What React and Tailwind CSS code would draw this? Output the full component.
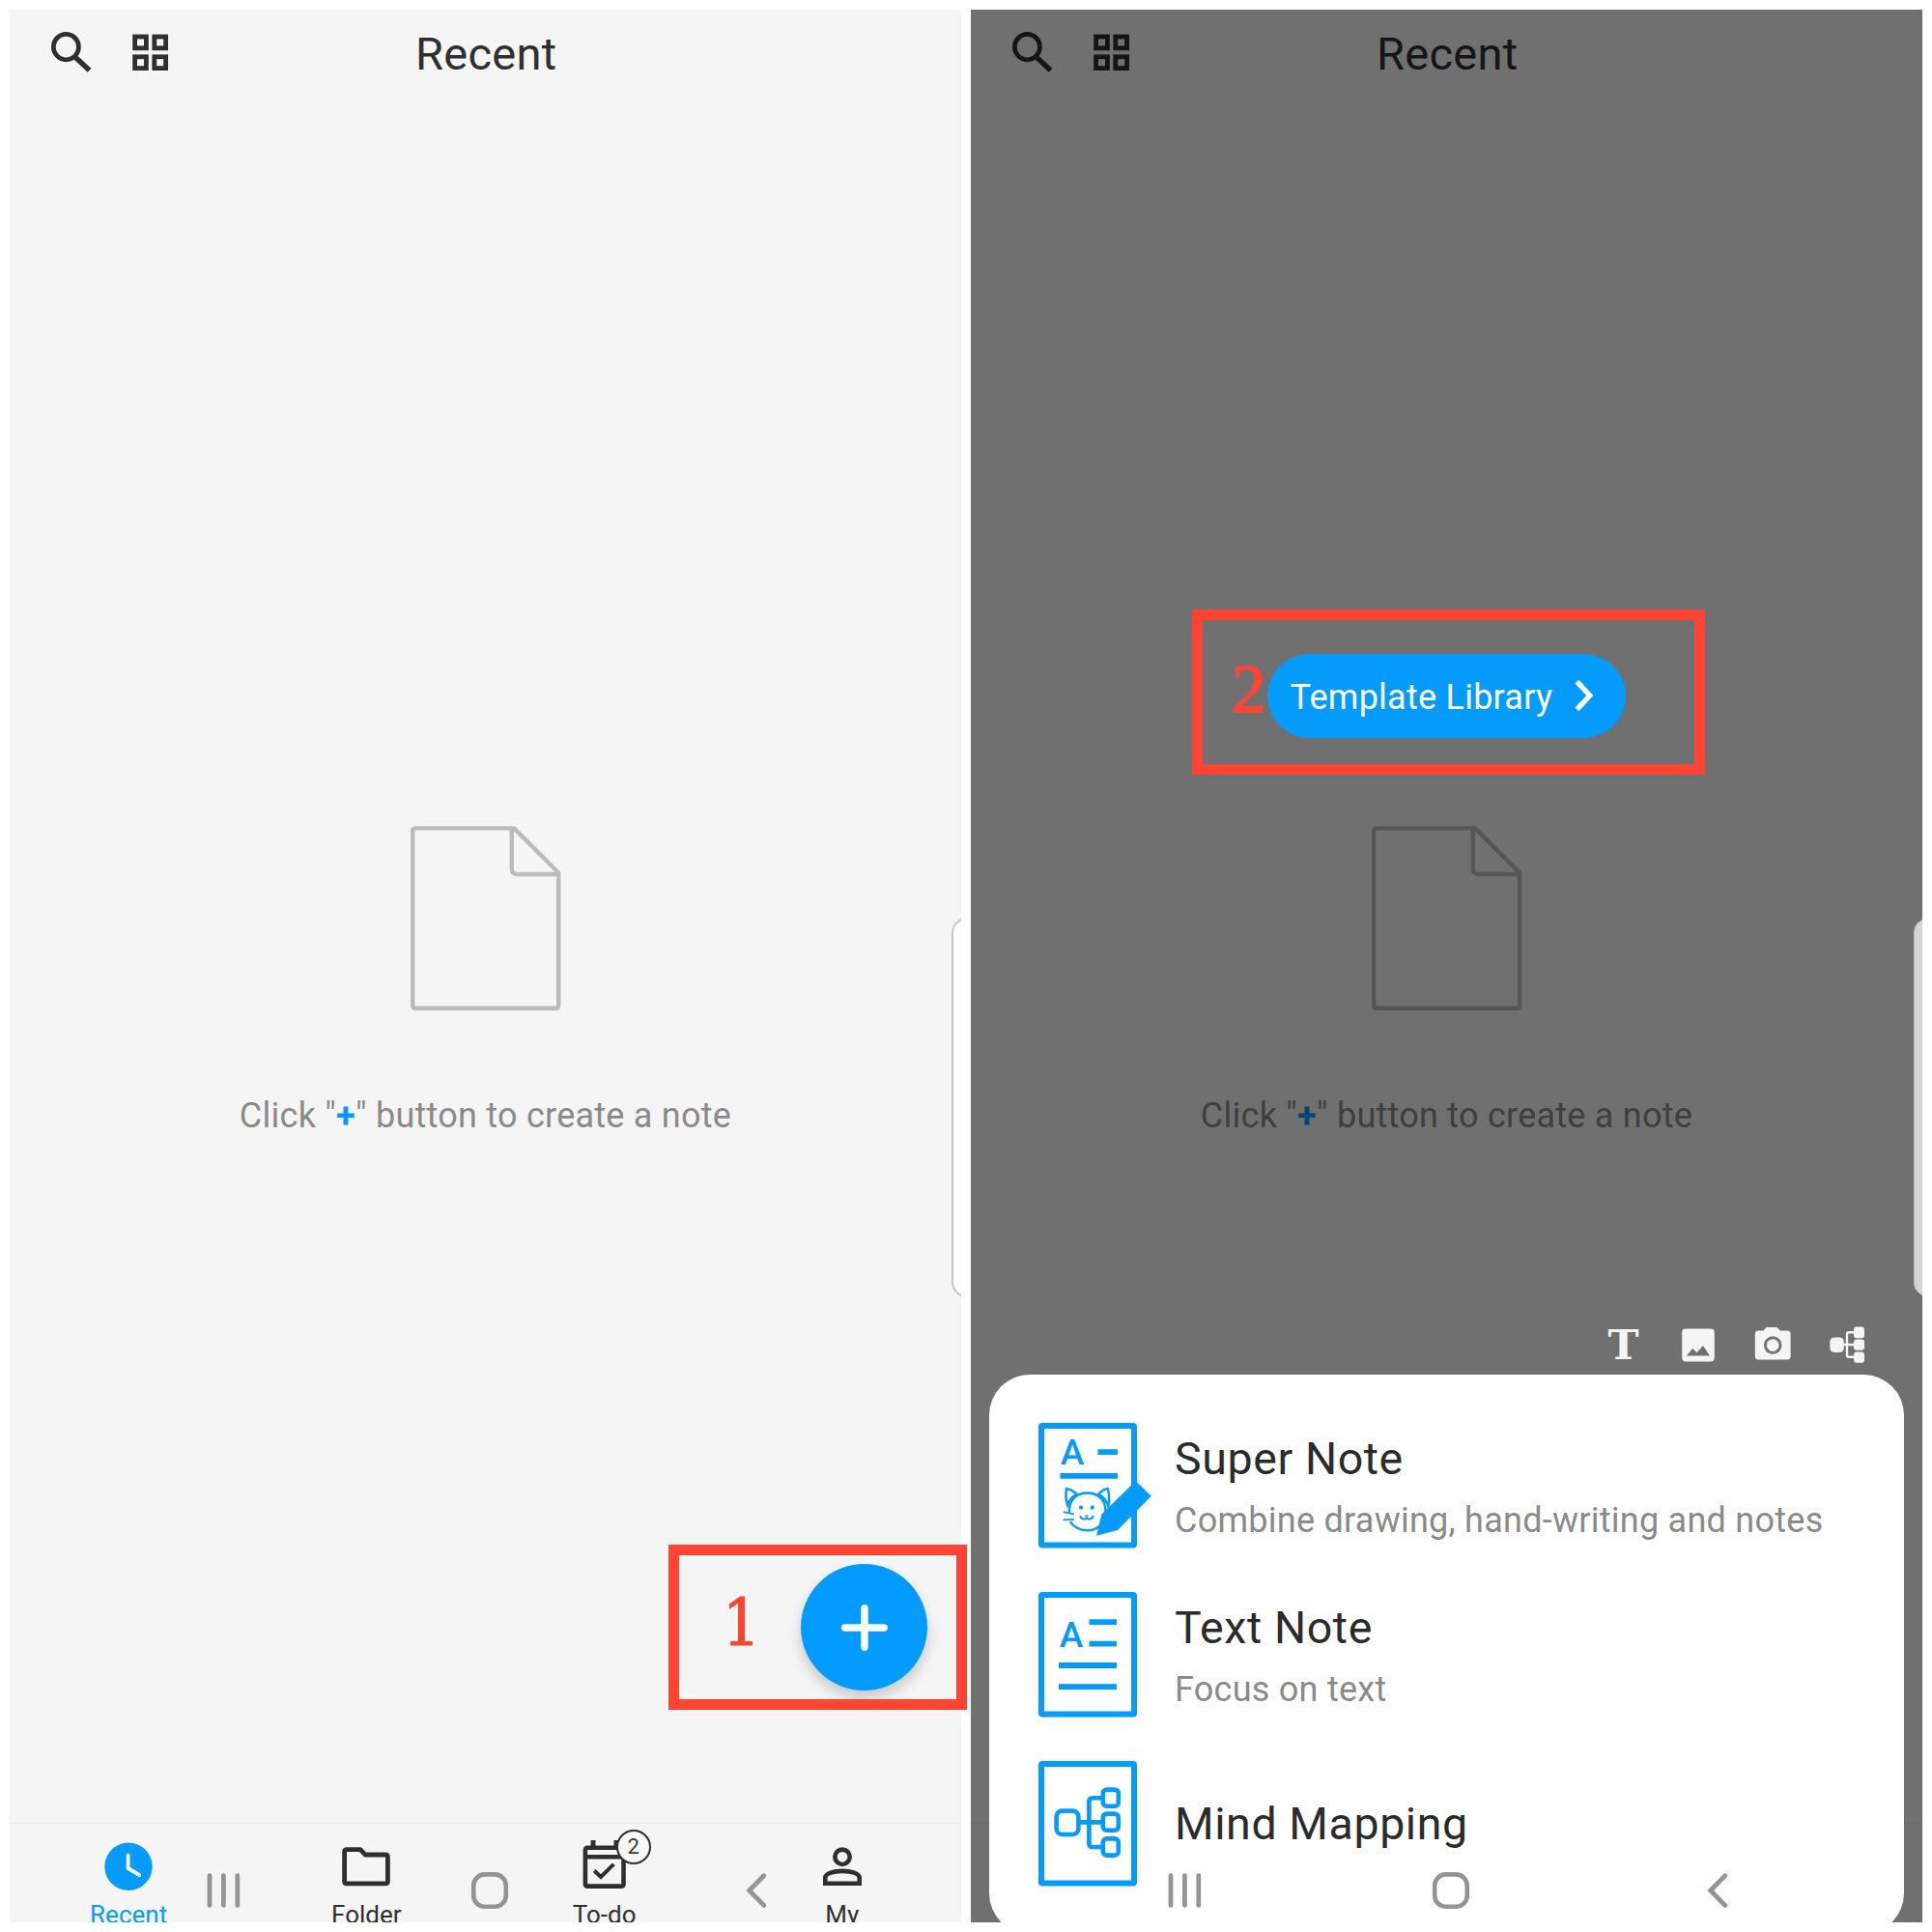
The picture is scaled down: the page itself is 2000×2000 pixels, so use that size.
import React from "react";

const BLUE = "#049bfb";

function SearchIcon() {
  return (
    <svg width="42" height="42" viewBox="0 0 42 42" fill="none" stroke="#2f2f2f">
      <ellipse cx="15.4" cy="15.6" rx="13" ry="13.2" strokeWidth="4.8" />
      <path d="M25.5 26.8 L39.6 39.8" strokeWidth="5.4" />
    </svg>
  );
}

function GridIcon() {
  return (
    <svg width="38" height="38" viewBox="0 0 38 38" fill="none" stroke="#2f2f2f" strokeWidth="4.8">
      <rect x="2.6" y="3" width="11.8" height="11.8" />
      <rect x="22.8" y="3" width="11.8" height="11.8" />
      <rect x="2.6" y="23.8" width="11.8" height="11.8" />
      <rect x="22.8" y="23.8" width="11.8" height="11.8" />
    </svg>
  );
}

function EmptyPage() {
  return (
    <svg width="156" height="192" viewBox="0 0 156 192" fill="none" stroke="#bbbbbb" strokeWidth="4.4" strokeLinejoin="round">
      <path d="M107 2.4 H5 Q2.2 2.4 2.2 5 V186 Q2.2 188.8 5 188.8 H150.4 Q153.2 188.8 153.2 186 V48.5 Z" />
      <path d="M104.8 3 V44.5 Q104.8 50 110.5 50 H152" />
    </svg>
  );
}

function ClockIcon() {
  return (
    <svg width="50" height="50" viewBox="0 0 50 50" fill="none">
      <circle cx="25" cy="25.3" r="24.7" fill={BLUE} />
      <path d="M24.6 13.5 V27 L36.3 34" stroke="#fff" strokeWidth="3.8" strokeLinecap="round" strokeLinejoin="round" />
    </svg>
  );
}

function FolderIcon() {
  return (
    <svg width="50" height="50" viewBox="0 0 50 50" fill="none" stroke="#2f2f2f" strokeWidth="4.8" strokeLinejoin="round">
      <path d="M5 7.6 H19 L24.2 13 H45 Q47.4 13 47.4 15.4 V40.4 Q47.4 42.8 45 42.8 H5 Q2.6 42.8 2.6 40.4 V10 Q2.6 7.6 5 7.6 Z" />
    </svg>
  );
}

function TodoIcon() {
  return (
    <div className="relative">
      <svg width="50" height="50" viewBox="0 0 50 50" fill="none" stroke="#2f2f2f" className="overflow-visible">
        <rect x="4.9" y="5.8" width="39.6" height="39.8" rx="2" strokeWidth="4.6" />
        <path d="M3.5 15.3 H46" strokeWidth="4.4" />
        <path d="M13 -2 V6 M37 -2 V6" strokeWidth="5" />
        <path d="M14.2 29.5 L21 36 L34.3 22.8" strokeWidth="4" />
      </svg>
      <span className="absolute left-[37px] top-[-13px] flex h-[36px] w-[36px] items-center justify-center rounded-full border-2 border-[#2f2f2f] bg-[#f8f8f8] text-[22px] leading-none text-[#3a3a3a]">
        2
      </span>
    </div>
  );
}

function PersonIcon() {
  return (
    <svg width="50" height="50" viewBox="0 0 50 50" fill="none" stroke="#2f2f2f" strokeWidth="4.6">
      <circle cx="25" cy="15.3" r="7.7" />
      <path d="M7.3 42.8 V37 C7.3 27.5 42.7 27.5 42.7 37 V42.8 Z" />
    </svg>
  );
}

const tabs = [
  { label: "Recent", Icon: ClockIcon, active: true },
  { label: "Folder", Icon: FolderIcon },
  { label: "To-do", Icon: TodoIcon },
  { label: "My", Icon: PersonIcon },
];

function RecentScreen() {
  return (
    <div className="flex h-full flex-col">
      <header className="grid h-[87px] grid-cols-3 items-center">
        <div className="flex items-center gap-[42px] pl-[42.5px]">
          <SearchIcon />
          <GridIcon />
        </div>
        <h1 className="pl-[1.5px] pt-[5px] text-center text-[47px] leading-[50px] tracking-[0.3px] text-[#2f2f2f]">Recent</h1>
      </header>
      <main className="flex flex-1 flex-col items-center pt-[758px]">
        <EmptyPage />
        <p className="mt-[88px] whitespace-pre text-[36px] leading-[40px] tracking-[0.25px] text-[#8a8a8a]">
          Click "<span className="font-bold text-[#049bfb]">+</span>" button to create a note
        </p>
      </main>
      <nav className="grid h-[103px] grid-cols-4 border-t border-[#e9e9e9]">
        {tabs.map(({ label, Icon, active }) => (
          <div key={label} className="flex flex-col items-center pt-[19px]">
            <Icon />
            <span className={"mt-[10px] text-[26px] leading-[30px] " + (active ? "text-[#049bfb]" : "text-[#2f2f2f]")}>
              {label}
            </span>
          </div>
        ))}
      </nav>
    </div>
  );
}

function SystemNav() {
  return (
    <div className="absolute bottom-[13.5px] left-[201px] flex gap-[236px]">
      <svg width="40" height="40" viewBox="0 0 40 40" stroke="#949494" strokeWidth="4.8" strokeLinecap="round">
        <path d="M6 4.6 V35.4 M20.4 4.6 V35.4 M34.8 4.6 V35.4" />
      </svg>
      <svg width="40" height="40" viewBox="0 0 40 40" fill="none" stroke="#949494" strokeWidth="4.6">
        <rect x="3.2" y="3.4" width="33.6" height="33.4" rx="11.5" />
      </svg>
      <svg width="40" height="40" viewBox="0 0 40 40" fill="none" stroke="#949494" strokeWidth="4.8" strokeLinecap="round">
        <path d="M27.8 4.8 L12.6 20 L27.8 35.4" />
      </svg>
    </div>
  );
}

function PageFrame({ children }) {
  return (
    <svg width="120" height="130" viewBox="0 0 120 130" fill="none" stroke={BLUE} className="shrink-0">
      <rect x="3" y="3" width="96" height="123.4" rx="1" strokeWidth="6" />
      {children}
    </svg>
  );
}

function LetterA({ x, y }) {
  return (
    <text x={x} y={y} textAnchor="middle" stroke="none" fill={BLUE} className="font-['Roboto'] text-[37px] font-medium">
      A
    </text>
  );
}

function SuperNoteIcon() {
  return (
    <PageFrame>
      <LetterA x="35" y="43.3" />
      <path d="M61.4 30.2 H82 M22.5 54.9 H82" strokeWidth="5.8" />
      <g strokeWidth="2.5">
        <path d="M32 93 C31 80 39 72.5 50.5 72.5 C62 72.5 69.5 80 69.5 91 C69.5 103 62 111.3 51 111.3 C42 111.3 35.5 107 33 102" />
        <path d="M40 74 C36 70.5 32.5 68.5 29 68 C28 74 28.5 80 30 85 C32 79.5 35.5 76 40 74 Z" />
        <path d="M61.8 74 C65 70.5 68.5 68.5 71.8 68 C73.3 74 73.5 81 72.3 86 C70 79.5 66.5 76 61.8 74 Z" />
        <path d="M26 92.2 L37 94.6 M25.4 100.4 L37 99.9" strokeWidth="1.8" />
        <path d="M43.3 96 C43.3 100.5 49.8 100.5 49.8 97.5 C49.8 100.5 56.5 100.5 56.5 96" strokeWidth="1.9" />
      </g>
      <g fill={BLUE} stroke="none">
        <circle cx="44" cy="87.7" r="2.1" />
        <circle cx="55.7" cy="87.7" r="2.1" />
        <path d="M47.6 95.4 H52 L49.8 97.8 Z" />
        <path d="M60 116.7 L65.4 94.5 L100.7 60 L116.8 75.7 L82 111 Z" />
      </g>
    </PageFrame>
  );
}

function TextNoteIcon() {
  return (
    <PageFrame>
      <LetterA x="34" y="57" />
      <path d="M52.5 31.2 H81 M52.5 53.6 H81 M21 76 H81 M21 98.2 H81" strokeWidth="5.8" />
    </PageFrame>
  );
}

function MindMapIcon() {
  return (
    <PageFrame>
      <g strokeWidth="4.6">
        <rect x="18.6" y="51.6" width="22.8" height="24.4" rx="6" />
        <rect x="66.8" y="29.6" width="16" height="17.2" rx="3.8" />
        <rect x="66.8" y="54.6" width="16" height="17.2" rx="3.8" />
        <rect x="66.8" y="80.4" width="16" height="17.2" rx="3.8" />
        <path d="M42 63.4 H66 M66 38.2 H56 Q52.4 38.2 52.4 42 V85.2 Q52.4 89 56 89 H66" />
      </g>
    </PageFrame>
  );
}

const noteTypes = [
  { title: "Super Note", note: "Combine drawing, hand-writing and notes", Icon: SuperNoteIcon },
  { title: "Text Note", note: "Focus on text", Icon: TextNoteIcon },
  { title: "Mind Mapping", Icon: MindMapIcon },
];

function QuickActions() {
  return (
    <div className="absolute right-[58.5px] top-[1362px] flex h-[40px] items-center gap-[37px]">
      <span className="flex w-[40px] justify-center font-['DejaVu_Serif'] text-[43px] font-bold leading-[40px] text-[#f5f5f5]">T</span>
      <svg width="40" height="40" viewBox="0 0 40 40">
        <rect x="3.2" y="3.4" width="33.6" height="34" rx="4" fill="#f5f5f5" />
        <path d="M8 31.6 L14.2 23.8 L18.4 28.2 L25 21 L32 31.6 Z" fill="#717171" />
      </svg>
      <svg width="40" height="40" viewBox="0 0 40 40">
        <path d="M13.5 2 H24.5 L27.8 5.4 H35 Q38.6 5.4 38.6 9 V32 Q38.6 35.6 35 35.6 H5.4 Q1.8 35.6 1.8 32 V9 Q1.8 5.4 5.4 5.4 H10.4 Z" fill="#f5f5f5" />
        <circle cx="20.2" cy="20.6" r="7.8" fill="none" stroke="#717171" strokeWidth="2.9" />
      </svg>
      <svg width="40" height="40" viewBox="0 0 40 40" fill="#f5f5f5">
        <rect x="2.4" y="12.4" width="14.4" height="15.6" rx="4.4" />
        <rect x="27" y="1.4" width="11" height="11.8" rx="3" />
        <rect x="27" y="14.4" width="11" height="11.4" rx="3" />
        <rect x="27" y="27.4" width="11" height="11.4" rx="3" />
        <path d="M16 20 H28 M28 7.2 H22 Q20 7.2 20 9.2 V30.8 Q20 32.8 22 32.8 H28" fill="none" stroke="#f5f5f5" strokeWidth="2.4" />
      </svg>
    </div>
  );
}

function CreateSheet() {
  return (
    <section className="absolute left-[18.5px] top-[1413px] flex h-[579px] w-[947.5px] flex-col gap-[45px] rounded-[42px] bg-white pl-[51px] pt-[50px]">
      {noteTypes.map(({ title, note, Icon }) => (
        <div key={title} className="flex h-[130px] items-center gap-[21.5px]">
          <Icon />
          <div className="whitespace-nowrap">
            <div className={"text-[46.5px] leading-[60px] tracking-[0.6px] text-[#2b2b2b]" + (note ? " mt-[7px]" : "")}>{title}</div>
            {note && <div className="mt-[4px] text-[36px] leading-[60px] tracking-[0.26px] text-[#8a8a8a]">{note}</div>}
          </div>
        </div>
      ))}
    </section>
  );
}

export default function App() {
  return (
    <div className="relative flex h-[2000px] w-[2000px] gap-[10px] overflow-hidden bg-white p-[10px] font-['Roboto',sans-serif]">
      <div className="relative h-[1980px] w-[985px] overflow-hidden bg-[#f5f5f5]">
        <RecentScreen />
        <div className="absolute left-[974.5px] top-[940px] h-[393px] w-[40px] rounded-[16px] border-2 border-[#c6c6c6] bg-[#fdfdfd]" />
        <button className="absolute left-[819px] top-[1609px] flex h-[131px] w-[131px] items-center justify-center rounded-full bg-[#029bff] shadow-[0_8px_14px_rgba(0,0,0,0.18)]">
          <svg width="48" height="48" viewBox="0 0 48 48" stroke="#fff" strokeWidth="7.4" strokeLinecap="round">
            <path d="M24 3.7 V44.3 M3.7 24 H44.3" />
          </svg>
        </button>
        <SystemNav />
      </div>

      <div className="relative h-[1980px] w-[985px] overflow-hidden bg-[#f5f5f5]">
        <RecentScreen />
        <div className="absolute inset-0 bg-black/54" />
        <div className="absolute left-[975.5px] top-[941px] h-[391px] w-[40px] rounded-[14px] border border-[#bdbdbd] bg-[#d5d5d5]" />
        <button className="absolute left-[306.5px] top-[666.5px] flex h-[87px] w-[371.5px] items-center whitespace-nowrap rounded-full bg-[#049bfb] pl-[24px] text-[36px] tracking-[0.25px] text-white">
          <span className="mt-[4px]">Template Library</span>
          <svg width="20" height="34" viewBox="0 0 20 34" fill="none" stroke="#fff" strokeWidth="5.4" className="ml-[23px] mt-[-1px]">
            <path d="M2.4 2.6 L15.8 17 L2.4 31.4" />
          </svg>
        </button>
        <QuickActions />
        <CreateSheet />
        <SystemNav />
      </div>

      <div className="absolute left-[692px] top-[1599px] h-[171px] w-[308.5px] border-[11px] border-[#ff4433]" />
      <span className="absolute left-[748px] top-[1645px] font-['DejaVu_Serif'] text-[68px] leading-[70px] text-[#ff4433] [-webkit-text-stroke:1px_#ff4433] [font-stretch:condensed]">1</span>
      <div className="absolute left-[1234px] top-[631px] h-[171px] w-[531px] border-[11px] border-[#ff4433]" />
      <span className="absolute left-[1275px] top-[677px] font-['Liberation_Serif'] text-[71px] leading-[72px] text-[#ff4433] [-webkit-text-stroke:1.5px_#ff4433]">2</span>
    </div>
  );
}
